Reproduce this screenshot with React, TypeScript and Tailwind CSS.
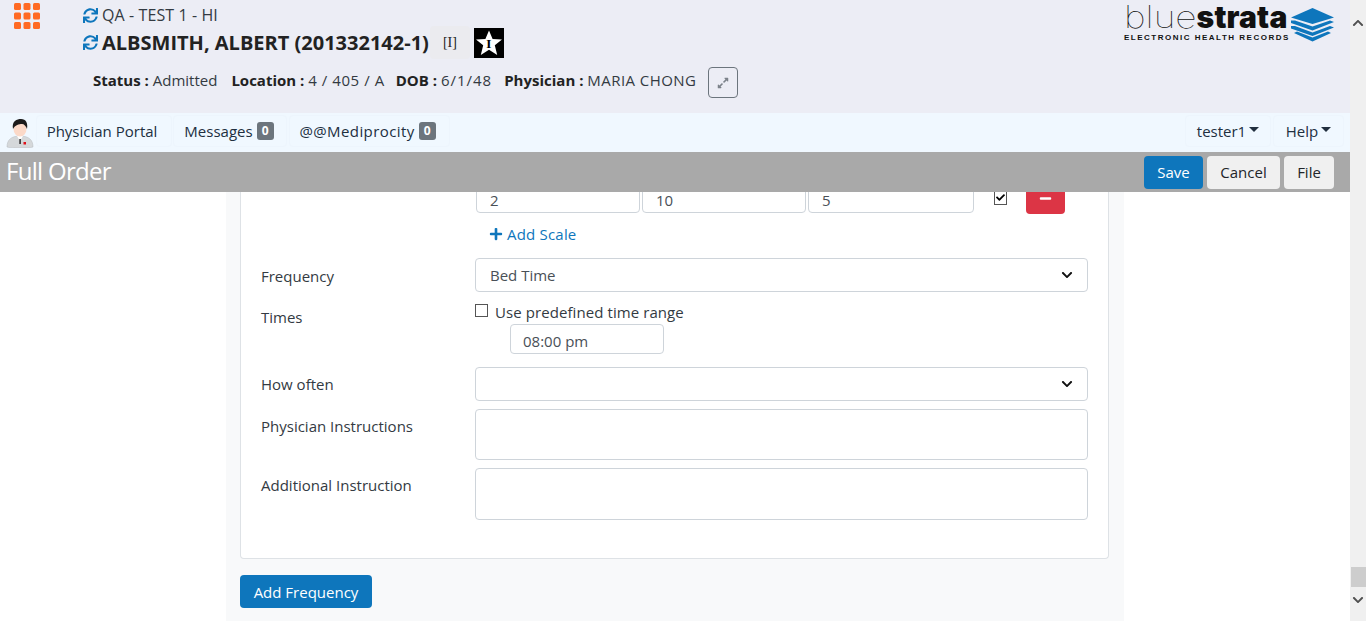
import React from 'react';
import { FaSync, FaExpandAlt, FaPlus, FaMinus, FaChevronDown, FaChevronUp, FaCheck } from 'react-icons/fa';

const AppsIcon: React.FC = () => (
  <svg width="26" height="26" viewBox="0 0 26 26" className="block">
    {[0, 9.5, 19].map((y) =>
      [0, 9.5, 19].map((x) => <rect key={`${x}-${y}`} x={x} y={y} width="7" height="7" rx="1.5" fill="#ff6a23" />)
    )}
  </svg>
);

const DoctorIcon: React.FC = () => (
  <svg width="28" height="30" viewBox="0 0 28 30" className="block">
    <path d="M1 29c0-7 4-11 13-11s13 4 13 11c-4 1.500-22 1.500-26 0z" fill="#d5d8da" stroke="#b5b9bc" strokeWidth="0.5" />
    <path d="M11 18l3 5 3-5z" fill="#fff" />
    <rect x="13.300" y="21" width="1.600" height="5" fill="#333" />
    <rect x="17.500" y="24" width="2.500" height="2.500" fill="#e0101a" />
    <ellipse cx="14" cy="11" rx="6.500" ry="7.500" fill="#fbd9c8" />
    <path d="M7 11C5.500 3 11 1 15 1c5 0 7 4 6 10-1-3-3-5-5-5-3 0-7 1-9 5z" fill="#1b1b1b" />
  </svg>
);

const StarBadge: React.FC = () => (
  <div className="relative w-[30px] h-[30px] bg-black flex items-center justify-center">
    <svg width="28" height="28" viewBox="0 0 28 28" className="absolute left-[1px] top-[1px]">
      <polygon points="14,1.500 17.600,10 27,10.500 19.800,16.300 22.200,26 14,20.800 5.800,26 8.200,16.300 1,10.500 10.400,10" fill="#fff" />
    </svg>
    <span className="relative top-[1px] text-[13px] font-bold text-black leading-none font-['Liberation_Serif',serif]">I</span>
  </div>
);

const StrataLogo: React.FC = () => (
  <svg width="45" height="34" viewBox="0 0 45 34" className="block mt-[7px]">
    <polygon points="22.500,0 44,9.500 22.500,16 1,9.500" fill="#0e76bc" />
    <polygon points="1,12.500 5,12.500 22.500,18.500 40,12.500 44,14 22.500,22.500 1,15" fill="#0e76bc" />
    <polygon points="1,18 5,18 22.500,24.500 40,18 44,19.500 22.500,28 1,20.500" fill="#0e76bc" />
    <polygon points="7,23.500 22.500,29.500 38,23.500 41,25 22.500,33.500 4,25" fill="#0e76bc" />
  </svg>
);

const NavTab: React.FC<{ className: string; children: React.ReactNode }> = ({ className, children }) => (
  <div className={`h-[32px] flex items-center justify-center gap-[4px] rounded border border-[#edf5fd] text-[#212f3f] ${className}`}>
    {children}
  </div>
);

const Badge: React.FC<{ value: number }> = ({ value }) => (
  <span className="w-[17px] h-[18px] rounded-[3px] bg-[#6c757d] text-white text-[12px] font-bold leading-[18px] text-center">{value}</span>
);

const Caret: React.FC = () => (
  <span className="-ml-[1px] mb-[3px] border-x-[5px] border-t-[5px] border-x-transparent border-t-[#212f3f]" />
);

const SelectBox: React.FC<{ value?: string }> = ({ value }) => (
  <div className="w-[613px] h-[34px] border border-[#ced4da] rounded flex items-center justify-between pl-[14px] pr-[14px] text-[#495057] bg-white">
    <span className="pt-[1px]">{value}</span>
    <FaChevronDown className="text-[#111] text-[12px]" />
  </div>
);

const FieldRow: React.FC<{ label: string; className: string; labelClass?: string; children: React.ReactNode }> = ({ label, className, labelClass, children }) => (
  <div className={`flex ${className}`}>
    <div className={`w-[234px] shrink-0 pl-[20px] text-[#333a42] ${labelClass ?? ''}`}>{label}</div>
    {children}
  </div>
);

const ScaleInput: React.FC<{ value: string; width: string }> = ({ value, width }) => (
  <div className={`${width} h-[36px] border border-[#ced4da] rounded pl-[13px] pt-[15px] leading-[14px] text-[#495057] bg-white`}>{value}</div>
);

const App: React.FC = () => {
  return (
    <div className="h-[621px] w-[1366px] overflow-hidden flex font-['Open_Sans',sans-serif] text-[15px] text-[#212529] bg-white">
      <div className="w-[1350px] h-full flex flex-col">
        <header className="h-[113px] shrink-0 bg-[#ecedf5] flex">
          <div className="w-[83px] pl-[14px] pt-[3px]">
            <AppsIcon />
          </div>
          <div className="w-[1041px]">
            <div className="flex items-center gap-[4px] h-[16px] mt-[7px] text-[#333a42]">
              <FaSync className="text-[#0e76bc] text-[15px]" />
              <span className="text-[16px] tracking-[0.1px]">QA - TEST 1 - HI</span>
            </div>
            <div className="flex items-center h-[33px] mt-[3px]">
              <FaSync className="text-[#0e76bc] text-[15px] mr-[4px]" />
              <span className="text-[20px] font-bold text-[#222]">ALBSMITH, ALBERT (201332142-1)</span>
              <span className="w-[40px] h-[33px] bg-[#ebebef] rounded ml-[1px] flex items-center justify-center text-[14px] text-[#222] font-['Liberation_Serif',serif]">[I]</span>
              <div className="ml-[4px]"><StarBadge /></div>
            </div>
            <div className="flex items-start mt-[8px] ml-[10px] text-[#333a42] h-[31px]">
              <span className="mt-[2px]"><b className="text-[#222]">Status :</b> Admitted</span>
              <span className="mt-[2px] ml-[14px]"><b className="text-[#222]">Location :</b> <span className="tracking-[0.55px]">4 / 405 / A</span></span>
              <span className="mt-[2px] ml-[11px]"><b className="text-[#222]">DOB :</b> <span className="tracking-[1px]">6/1/48</span></span>
              <span className="mt-[2px] ml-[12px]"><b className="text-[#222]">Physician :</b> <span className="tracking-[0.45px]">MARIA CHONG</span></span>
              <div className="ml-[12px] w-[30px] h-[31px] border border-[#6c757d] rounded flex items-center justify-center">
                <FaExpandAlt className="text-[#7c828a] text-[12px]" />
              </div>
            </div>
          </div>
          <div className="pt-[1px] flex items-start">
            <div className="w-[166px]">
              <div className="h-[31px] flex items-end leading-none text-[#111] font-['Inter',sans-serif] whitespace-nowrap">
                <span className="inline-block origin-left scale-x-[1.2] font-[100] text-[31px] mr-[12px] shrink-0">blue</span>
                <span className="font-[900] text-[30px] tracking-[0.2px]">strata</span>
              </div>
              <div className="mt-[1px] text-[8px] leading-[9px] font-bold tracking-[1.500px] whitespace-nowrap text-[#111] font-['Liberation_Sans',sans-serif]">ELECTRONIC HEALTH RECORDS</div>
            </div>
            <StrataLogo />
          </div>
        </header>

        <nav className="h-[39px] shrink-0 bg-[#f0f8ff] flex items-start pt-[2px]">
          <div className="ml-[6px] mr-[1px] w-[28px] mt-[3px]"><DoctorIcon /></div>
          <NavTab className="w-[136px] ml-[1px] pr-[4px]">Physician Portal</NavTab>
          <NavTab className="w-[114px] ml-[1px] pr-[2px]">Messages <Badge value={0} /></NavTab>
          <NavTab className="w-[161px] ml-[2px] pr-[4px]"><span className="tracking-[0.4px]">@@Mediprocity</span> <Badge value={0} /></NavTab>
          <div className="flex-1" />
          <NavTab className="w-[86px]">tester1<Caret /></NavTab>
          <NavTab className="w-[71px] ml-[2px] mr-[6px]">Help<Caret /></NavTab>
        </nav>

        <div className="h-[40px] shrink-0 bg-[#a9a9a9] flex items-center pl-[6px] pr-[16px] relative z-10">
          <div className="flex-1 text-[24px] leading-[30px] -mt-[3px] text-white tracking-[-0.7px]">Full Order</div>
          <button className="w-[59px] h-[33px] rounded bg-[#0e76bc] text-white">Save</button>
          <button className="w-[73px] h-[33px] rounded bg-[#f0f0f0] ml-[4px] text-[#212529]">Cancel</button>
          <button className="w-[50px] h-[33px] rounded bg-[#f0f0f0] ml-[4px] text-[#212529]">File</button>
        </div>

        <main className="flex-1 overflow-hidden bg-white pl-[226px]">
          <div className="w-[898px] h-full bg-[#f8f9fa] pl-[14px]">
            <div className="w-[869px] h-[367px] bg-white border border-t-0 border-[#dee2e6] rounded-b">
              <div className="flex h-[22px] overflow-hidden">
                <div className="flex pl-[235px] -mt-[15px]">
                  <ScaleInput value="2" width="w-[164px]" />
                  <ScaleInput value="10" width="w-[164px] ml-[2px]" />
                  <ScaleInput value="5" width="w-[166px] ml-[2px]" />
                </div>
                <div className="ml-[20px] -mt-[2px] w-[13px] h-[15px] border border-[#555] bg-white flex items-center justify-center">
                  <FaCheck className="text-black text-[9px]" />
                </div>
                <div className="ml-[19px] w-[39px] h-[22px] rounded-b bg-[#dc3545] flex items-start justify-center">
                  <FaMinus className="text-white text-[13px]" />
                </div>
              </div>
              <div className="h-[20px] mt-[10px] pl-[248px] flex items-center gap-[4px] text-[#0e76bc]">
                <FaPlus className="text-[14px]" />
                <span className="tracking-[0.2px]">Add Scale</span>
              </div>
              <FieldRow label="Frequency" className="mt-[14px] items-center" labelClass="pt-[2px]">
                <SelectBox value="Bed Time" />
              </FieldRow>
              <FieldRow label="Times" className="mt-[12px] h-[63px] leading-[22px]" labelClass="pt-[2px]">
                <div>
                  <div className="flex items-center h-[20px] -mt-[2px] text-[#333a42] tracking-[0.08px]">
                    <span className="w-[13px] h-[13px] border border-[#555] bg-white mr-[7px] -mt-[3px]" />
                    Use predefined time range
                  </div>
                  <div className="ml-[35px] mt-[2px] w-[154px] h-[30px] border border-[#ced4da] rounded pl-[12px] pt-[3px] flex items-center text-[#495057]">08:00 pm</div>
                </div>
              </FieldRow>
              <FieldRow label="How often" className="items-center">
                <SelectBox />
              </FieldRow>
              <FieldRow label="Physician Instructions" className="mt-[8px]" labelClass="pt-[6px]">
                <div className="w-[613px] h-[51px] border border-[#ced4da] rounded" />
              </FieldRow>
              <FieldRow label="Additional Instruction" className="mt-[8px]" labelClass="pt-[6px]">
                <div className="w-[613px] h-[52px] border border-[#ced4da] rounded" />
              </FieldRow>
            </div>
            <button className="mt-[16px] w-[132px] h-[33px] rounded bg-[#0e76bc] text-white pt-[1px]">Add Frequency</button>
          </div>
        </main>
      </div>

      <aside className="w-[16px] h-full bg-[#f0f0f0] flex flex-col items-center text-[#505050]">
        <FaChevronUp className="mt-[17px] text-[12px]" />
        <div className="flex-1" />
        <div className="w-[15px] h-[20px] bg-[#cdcdcd] mb-[7px]" />
        <FaChevronDown className="mb-[15px] text-[12px]" />
      </aside>
    </div>
  );
};

export default App;
